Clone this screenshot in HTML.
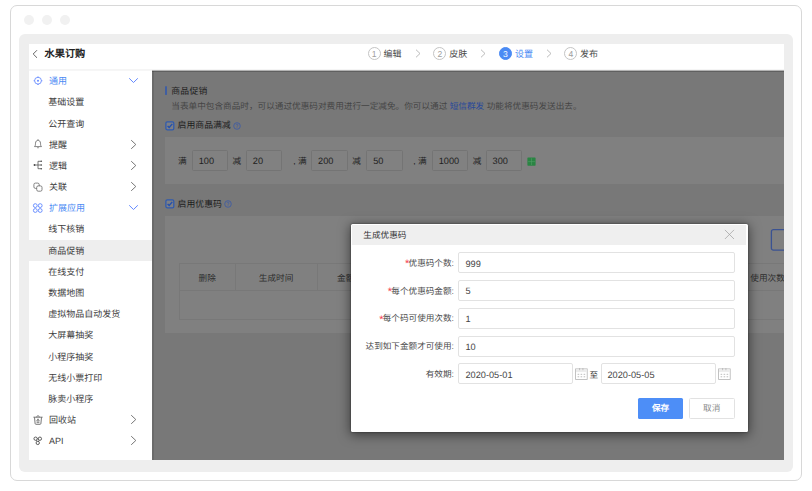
<!DOCTYPE html>
<html lang="zh-CN">
<head>
<meta charset="utf-8">
<title>生成优惠码</title>
<style>
*{box-sizing:border-box;margin:0;padding:0}
html,body{width:812px;height:491px;overflow:hidden;background:#fff}
body{position:relative;font-family:"Liberation Sans",sans-serif;color:#333;font-size:9px;line-height:1;text-rendering:geometricPrecision}
.abs,.abs>*{position:absolute}
div,span,svg,a{position:absolute;white-space:nowrap}
.it .t,.stept,#title,.mt,.lab,.fl{text-align-last:justify}
/* frames */
#outer{left:10px;top:5px;width:792px;height:476px;border:1px solid #d8d8d8;border-radius:7px;background:#fff}
.dot{width:10px;height:10px;border-radius:50%;background:#f1f1f1;top:14.7px}
#inner{left:19px;top:34px;width:774px;height:437.5px;background:#eeeeee;border-radius:6px}
#app{left:29px;top:44px;width:755px;height:416px;background:#fff;overflow:hidden}
/* header */
#hdr{left:0;top:0;width:755px;height:26px;background:#fff;border-bottom:1px solid #f5f5f5}
#hl1{left:0;top:26px;width:123px;height:1px;background:#f6f6f6;z-index:3}
#hl2{left:123px;top:26px;width:632px;height:1px;background:#b4b4b4;z-index:3}
#title{left:15.5px;top:4.6px;font-size:10.2px;font-weight:bold;color:#222;line-height:11px}
.stepc{width:13px;height:13px;border-radius:50%;border:1px solid #c4c4c4;top:3px;font-size:8.6px;line-height:12.2px;text-align:center;color:#a0a0a0}
.stepc.on{background:#4a8af4;border-color:#4a8af4;color:#fff}
.stept{top:4.9px;font-size:9px;line-height:10px;color:#484848}
.stept.on{color:#4a8af4}
/* sidebar */
#side{left:0;top:26px;width:123px;height:390px;background:#fff}
.it{left:0;width:123px;height:21.15px}
.it .t{left:20px;top:5.5px;font-size:9px;line-height:10px;color:#404040}
.it.b .t{color:#4a8af4}
.it.sel{background:#eeeeee}
.it .ic{left:2.7px;top:4.1px}
.it .cr{left:101.2px;top:4.6px}
.it .cd{left:99.3px;top:6.7px}
.it{height:21.19px}
.it.sel{margin-top:-0.3px;height:21px}
.it.sel .t{margin-top:0.3px}
/* main */
#main{left:123px;top:26px;width:632px;height:390px;background:#787878}
#me1{left:0;top:1px;width:632px;height:1px;background:rgba(0,0,0,.2)}
#me2{left:0;top:1px;width:2px;height:389px;background:rgba(0,0,0,.1)}
.pnl{background:#808080}
.mt{font-size:8.65px;line-height:10px;color:#1c1c1c}
.inp{width:36.5px;height:21px;border:1px solid #747474;border-radius:1.5px;background:#818181;top:13px}
.inp span{left:5.8px;top:5px;font-size:9.2px;line-height:10px;color:#1e1e1e}
.lab{top:18.9px;font-size:8.65px;line-height:10px;color:#222}
/* modal */
#modal{left:322px;top:180.3px;width:396.6px;height:208.1px;background:#fff;border-radius:1.5px;box-shadow:0 0 2px rgba(0,0,0,.55),0 2px 12px 1px rgba(0,0,0,.5)}
#mhead{left:1px;top:0.9px;width:394.2px;height:20px;background:#efefef}
#mi{left:0;top:0.7px;width:396px;height:207px}
.fi{left:106.5px;width:277px;height:21px;border:1px solid #e2e2e2;border-radius:2px;background:#fff}
.fi span,.di span{left:7px;top:5.2px;font-size:9.2px;line-height:10px;color:#444}
.fl{right:293.1px;font-size:8.6px;line-height:10px;color:#4a4a4a}
.fl i{color:#f5404f;font-style:normal;display:inline-block;width:3.5px;font-size:11px;line-height:0;vertical-align:-1.6px;margin-left:-0.3px}
.di{height:21px;border:1px solid #e2e2e2;border-radius:2px;background:#fff;top:138.5px}
</style>
</head>
<body>
<div id="outer"></div>
<div class="dot" style="left:24px"></div>
<div class="dot" style="left:42px"></div>
<div class="dot" style="left:60px"></div>
<div id="inner"></div>

<div id="app">
  <!-- header -->
  <div id="hdr">
    <svg style="left:3px;top:5.3px" width="6" height="10" viewBox="0 0 6 10"><path d="M5 1.2 L1.2 5 L5 8.8" fill="none" stroke="#555" stroke-width="0.9"/></svg>
    <div id="title" style="width:40.77px">水果订购</div>

    <div class="stepc" style="left:338.7px">1</div>
    <div class="stept" style="width:18.04px;left:354.5px">编辑</div>
    <svg style="left:385.5px;top:4.8px" width="6" height="9" viewBox="0 0 6 9"><path d="M1 0.7 L5 4.5 L1 8.3" fill="none" stroke="#aaa" stroke-width="0.8"/></svg>

    <div class="stepc" style="left:404.4px">2</div>
    <div class="stept" style="width:18.04px;left:420.2px">皮肤</div>
    <svg style="left:451px;top:4.8px" width="6" height="9" viewBox="0 0 6 9"><path d="M1 0.7 L5 4.5 L1 8.3" fill="none" stroke="#aaa" stroke-width="0.8"/></svg>

    <div class="stepc on" style="left:469.8px">3</div>
    <div class="stept on" style="width:18.04px;left:486px">设置</div>
    <svg style="left:516.7px;top:4.8px" width="6" height="9" viewBox="0 0 6 9"><path d="M1 0.7 L5 4.5 L1 8.3" fill="none" stroke="#aaa" stroke-width="0.8"/></svg>

    <div class="stepc" style="left:535.3px">4</div>
    <div class="stept" style="width:18.04px;left:551px">发布</div>
  </div>

  <div id="hl1"></div><div id="hl2"></div>
  <!-- sidebar -->
  <div id="side">
    <div class="it b" style="top:0.64px"><svg class="ic" width="12" height="12" viewBox="0 0 12 12"><g transform="translate(0,-0.3)"><circle cx="6" cy="6" r="3.4" fill="none" stroke="#5a82ff" stroke-width="0.8"/><circle cx="6" cy="6" r="0.95" fill="#5a82ff"/><path d="M6 1.7v0.9M6 9.4v0.9M1.7 6h0.9M9.4 6h0.9" stroke="#5a82ff" stroke-width="1.1"/></g></svg><span class="t" style="width:18.04px">通用</span><svg class="cd" width="11" height="7" viewBox="0 0 11 7"><path d="M1.2 1.3 L5.5 5.5 L9.8 1.3" fill="none" stroke="#5a82ff" stroke-width="0.95"/></svg></div>
    <div class="it" style="top:21.83px"><span class="t" style="width:36.04px;left:19.3px">基础设置</span></div>
    <div class="it" style="top:43.01px"><span class="t" style="width:36.04px;left:19.3px">公开查询</span></div>
    <div class="it" style="top:64.2px"><svg class="ic" width="12" height="12" viewBox="0 0 12 12"><path d="M2.5 8.6 C3.5 7.8 3.4 6.6 3.5 5.2 C3.6 3.3 4.7 2.3 6 2.3 C7.3 2.3 8.4 3.3 8.5 5.2 C8.6 6.6 8.5 7.8 9.5 8.6 Z" fill="none" stroke="#666" stroke-width="0.8" stroke-linejoin="round"/><path d="M5.2 9.5 Q6 10.7 6.8 9.5" fill="none" stroke="#666" stroke-width="0.8"/><path d="M6 1.3v0.8" stroke="#666" stroke-width="0.8"/></svg><span class="t" style="width:18.04px">提醒</span><svg class="cr" width="7" height="11" viewBox="0 0 7 11"><path d="M1.2 1.2 L5.8 5.5 L1.2 9.8" fill="none" stroke="#666" stroke-width="0.9"/></svg></div>
    <div class="it" style="top:85.39px"><svg class="ic" width="12" height="12" viewBox="0 0 12 12"><circle cx="2.5" cy="6" r="0.9" fill="#444"/><path d="M2.5 6H9.4M6 2.3V9.7M6 2.3H9.4M6 9.7H9.4" fill="none" stroke="#555" stroke-width="0.8"/><circle cx="9.3" cy="2.3" r="0.8" fill="#555"/><circle cx="9.3" cy="6" r="0.8" fill="#555"/><circle cx="9.3" cy="9.7" r="0.8" fill="#555"/></svg><span class="t" style="width:18.04px">逻辑</span><svg class="cr" width="7" height="11" viewBox="0 0 7 11"><path d="M1.2 1.2 L5.8 5.5 L1.2 9.8" fill="none" stroke="#666" stroke-width="0.9"/></svg></div>
    <div class="it" style="top:106.58px"><svg class="ic" width="12" height="12" viewBox="0 0 12 12"><rect x="1.9" y="2.1" width="5.3" height="5.3" rx="1.5" fill="none" stroke="#666" stroke-width="0.8"/><rect x="4.7" y="4.9" width="5.3" height="5.3" rx="1.5" fill="#fff" stroke="#666" stroke-width="0.8"/></svg><span class="t" style="width:18.04px">关联</span><svg class="cr" width="7" height="11" viewBox="0 0 7 11"><path d="M1.2 1.2 L5.8 5.5 L1.2 9.8" fill="none" stroke="#666" stroke-width="0.9"/></svg></div>
    <div class="it b" style="top:127.76px"><svg class="ic" width="12" height="12" viewBox="0 0 12 12"><g fill="none" stroke="#557fff" stroke-width="0.85"><circle cx="3.3" cy="3.6" r="1.9"/><circle cx="8.2" cy="3.6" r="1.9"/><circle cx="3.3" cy="8.5" r="1.9"/><circle cx="8.2" cy="8.5" r="1.9"/></g></svg><span class="t" style="width:36.04px">扩展应用</span><svg class="cd" width="11" height="7" viewBox="0 0 11 7"><path d="M1.2 1.3 L5.5 5.5 L9.8 1.3" fill="none" stroke="#5a82ff" stroke-width="0.95"/></svg></div>
    <div class="it" style="top:148.95px"><span class="t" style="width:36.04px;left:19.3px">线下核销</span></div>
    <div class="it sel" style="top:170.14px"><span class="t" style="width:35.4px;width:36.04px;left:19.3px">商品促销</span></div>
    <div class="it" style="top:191.32px"><span class="t" style="width:36.04px;left:19.3px">在线支付</span></div>
    <div class="it" style="top:212.51px"><span class="t" style="width:36.04px;left:19.3px">数据地图</span></div>
    <div class="it" style="top:233.7px"><span class="t" style="width:72.04px;left:19.3px">虚拟物品自动发货</span></div>
    <div class="it" style="top:254.88px"><span class="t" style="width:45.04px;left:19.3px">大屏幕抽奖</span></div>
    <div class="it" style="top:276.07px"><span class="t" style="width:45.04px;left:19.3px">小程序抽奖</span></div>
    <div class="it" style="top:297.26px"><span class="t" style="width:54.04px;left:19.3px">无线小票打印</span></div>
    <div class="it" style="top:318.44px"><span class="t" style="width:45.04px;left:19.3px">脉卖小程序</span></div>
    <div class="it" style="top:339.63px"><svg class="ic" width="12" height="12" viewBox="0 0 12 12"><g fill="none" stroke="#555" stroke-width="0.8" transform="translate(0,-0.5)"><path d="M1.4 3.7H10.6"/><path d="M4.3 3.5 Q6 0.6 7.7 3.5"/><path d="M2.5 3.9 L3.1 10 Q3.2 10.8 4 10.8 H8 Q8.8 10.8 8.9 10 L9.5 3.9"/><path d="M6 5.3 L4.7 7.6 H7.3 Z M4.6 9.1 H7.4" stroke-width="0.7"/></g></svg><span class="t" style="width:27.04px">回收站</span><svg class="cr" width="7" height="11" viewBox="0 0 7 11"><path d="M1.2 1.2 L5.8 5.5 L1.2 9.8" fill="none" stroke="#666" stroke-width="0.9"/></svg></div>
    <div class="it" style="top:360.82px"><svg class="ic" width="12" height="12" viewBox="0 0 12 12"><g fill="none" stroke="#4c4c4c" stroke-width="0.9"><circle cx="3.6" cy="3.7" r="1.65"/><circle cx="7.9" cy="3.7" r="1.65"/><circle cx="5.75" cy="7.9" r="1.65"/><path d="M4.3 5.2 L5.1 6.4 M7.2 5.2 L6.4 6.4 M5.2 3.7H6.3" stroke-width="0.8"/></g></svg><span class="t" style="width:14.54px">API</span><svg class="cr" width="7" height="11" viewBox="0 0 7 11"><path d="M1.2 1.2 L5.8 5.5 L1.2 9.8" fill="none" stroke="#666" stroke-width="0.9"/></svg></div>
  </div>

  <!-- main (dimmed by overlay) -->
  <div id="main">
    <div id="me1"></div><div id="me2"></div>
    <svg style="left:12px;top:16px" width="4" height="10" viewBox="0 0 4 10"><rect x="1.25" y="0.3" width="1.5" height="8.6" fill="#2d55b0"/></svg>
    <div class="mt" style="width:36.04px;left:19.3px;top:16.3px;color:#1e1e1e;font-size:8.85px">商品促销</div>
    <div class="mt" style="width:410.22px;left:19.3px;top:30.7px;color:#454545">当表单中包含商品时，可以通过优惠码对费用进行一定减免。你可以通过 <a style="position:static;color:#28489a">短信群发</a> 功能将优惠码发送出去。</div>

    <svg style="left:12.8px;top:50.7px" width="10" height="10" viewBox="0 0 10 10"><rect x="0.9" y="0.9" width="7.9" height="7.9" rx="1.4" fill="#7d7f85" stroke="#2f5aae" stroke-width="1.25"/><path d="M2.6 4.9 L4.2 6.5 L7.3 2.9" fill="none" stroke="#2450ad" stroke-width="1.45"/></svg>
    <div class="mt" style="width:53.08px;left:25.6px;top:50.4px;font-size:8.85px">启用商品满减</div>
    <svg style="left:81px;top:51.6px" width="8" height="8" viewBox="0 0 8 8"><circle cx="4" cy="4" r="3.3" fill="none" stroke="#3a5aa8" stroke-width="0.8"/><path d="M3 3.2 Q3 2.2 4 2.2 Q5 2.2 5 3.1 Q5 3.8 4 4.2 V4.8 M4 5.4V6" fill="none" stroke="#3a5aa8" stroke-width="0.65"/></svg>

    <div class="pnl" style="left:13.3px;top:67.3px;width:619px;height:47px">
      <span class="lab" style="width:8.66px;left:12.7px">满</span>
      <div class="inp" style="left:26.6px"><span>100</span></div>
      <span class="lab" style="width:8.66px;left:67.3px">减</span>
      <div class="inp" style="left:80.7px"><span>20</span></div>
      <span class="lab" style="width:13.44px;left:128px">, 满</span>
      <div class="inp" style="left:146px"><span>200</span></div>
      <span class="lab" style="width:8.66px;left:187px">减</span>
      <div class="inp" style="left:201.1px"><span>50</span></div>
      <span class="lab" style="width:13.44px;left:248px">, 满</span>
      <div class="inp" style="left:266.6px"><span>1000</span></div>
      <span class="lab" style="width:8.66px;left:307.5px">减</span>
      <div class="inp" style="left:320.5px"><span>300</span></div>
      <svg style="left:362px;top:19.4px" width="9" height="9" viewBox="0 0 9 9"><rect x="0.4" y="0.5" width="8.2" height="8.2" rx="0.6" fill="#2a8443"/><path d="M4.5 1.2V8M1.1 4.6H7.9" stroke="#4f9d64" stroke-width="0.6"/></svg>
    </div>

    <svg style="left:12.8px;top:129.3px" width="10" height="10" viewBox="0 0 10 10"><rect x="0.9" y="0.9" width="7.9" height="7.9" rx="1.4" fill="#7d7f85" stroke="#2f5aae" stroke-width="1.25"/><path d="M2.6 4.9 L4.2 6.5 L7.3 2.9" fill="none" stroke="#2450ad" stroke-width="1.45"/></svg>
    <div class="mt" style="width:44.24px;left:25.6px;top:129.1px;font-size:8.85px">启用优惠码</div>
    <svg style="left:72.3px;top:130.1px" width="8" height="8" viewBox="0 0 8 8"><circle cx="4" cy="4" r="3.3" fill="none" stroke="#3a5aa8" stroke-width="0.8"/><path d="M3 3.2 Q3 2.2 4 2.2 Q5 2.2 5 3.1 Q5 3.8 4 4.2 V4.8 M4 5.4V6" fill="none" stroke="#3a5aa8" stroke-width="0.65"/></svg>

    <div class="pnl" style="left:13.3px;top:146.2px;width:619px;height:117px">
      <div style="left:13.5px;top:46.9px;width:606px;height:57px;border:1px solid #787878;border-right:0"></div>
      <div style="left:13.5px;top:74.3px;width:606px;height:1px;background:#787878"></div>
      <div style="left:69.7px;top:46.9px;width:1px;height:28px;background:#787878"></div>
      <div style="left:151.7px;top:46.9px;width:1px;height:28px;background:#787878"></div>
      <span class="mt" style="width:17.29px;left:33.2px;top:57.3px;color:#2e2e2e">删除</span>
      <span class="mt" style="width:34.54px;left:93.5px;top:57.3px;color:#2e2e2e">生成时间</span>
      <span class="mt" style="width:17.29px;left:171.7px;top:57.3px;color:#2e2e2e">金额</span>
      <span class="mt" style="width:34.54px;left:585px;top:57.3px;color:#2e2e2e">使用次数</span>
      <svg style="left:604px;top:11px" width="16" height="26" viewBox="0 0 16 26"><rect x="2.4" y="2.7" width="20" height="20.5" rx="2" fill="none" stroke="#3a5292" stroke-width="1.3"/></svg>
    </div>
  </div>

  <!-- modal -->
  <div id="modal">
    <div id="mhead">
      <span class="mt" style="width:43.16px;left:11.3px;top:4.6px;color:#333">生成优惠码</span>
      <svg style="left:372.2px;top:4.2px" width="11" height="11" viewBox="0 0 11 11"><path d="M0.9 0.9 L10 10 M10 0.9 L0.9 10" stroke="#a2a2a2" stroke-width="0.75" fill="none"/></svg>
    </div>
    <div id="mi">
    <span class="fl" style="width:48.58px;top:32.9px"><i>*</i>优惠码个数:</span>
    <span class="fl" style="width:65.77px;top:60.7px"><i>*</i>每个优惠码金额:</span>
    <span class="fl" style="width:74.36px;top:88.5px"><i>*</i>每个码可使用次数:</span>
    <span class="fl" style="width:88.35px;top:116.3px">达到如下金额才可使用:</span>
    <span class="fl" style="width:28.19px;top:144px">有效期:</span>
    <div class="fi" style="top:27.4px"><span>999</span></div>
    <div class="fi" style="top:55.2px"><span>5</span></div>
    <div class="fi" style="top:83px"><span>1</span></div>
    <div class="fi" style="top:110.8px"><span>10</span></div>

    <div class="di" style="left:106.5px;width:115.3px"><span>2020-05-01</span></div>
    <svg style="left:224.2px;top:143.3px" width="13" height="12" viewBox="0 0 13 12"><rect x="0.6" y="0.9" width="11.6" height="10.6" fill="#fff" stroke="#b4b4b4" stroke-width="0.8"/><rect x="1" y="1.3" width="10.8" height="2.8" fill="#ececec"/><path d="M4.6 0v2.2M7.9 0v2.2" stroke="#b4b4b4" stroke-width="0.8"/><g fill="#c4c4c4"><rect x="2.6" y="5.8" width="1.6" height="1.1"/><rect x="5.6" y="5.8" width="1.6" height="1.1"/><rect x="8.6" y="5.8" width="1.6" height="1.1"/><rect x="2.6" y="8.2" width="1.6" height="1.1"/><rect x="5.6" y="8.2" width="1.6" height="1.1"/><rect x="8.6" y="8.2" width="1.6" height="1.1"/></g></svg>
    <span class="mt" style="width:8.66px;left:238.6px;top:145.1px;color:#333">至</span>
    <svg style="left:367.3px;top:143.3px" width="13" height="12" viewBox="0 0 13 12"><rect x="0.6" y="0.9" width="11.6" height="10.6" fill="#fff" stroke="#b4b4b4" stroke-width="0.8"/><rect x="1" y="1.3" width="10.8" height="2.8" fill="#ececec"/><path d="M4.6 0v2.2M7.9 0v2.2" stroke="#b4b4b4" stroke-width="0.8"/><g fill="#c4c4c4"><rect x="2.6" y="5.8" width="1.6" height="1.1"/><rect x="5.6" y="5.8" width="1.6" height="1.1"/><rect x="8.6" y="5.8" width="1.6" height="1.1"/><rect x="2.6" y="8.2" width="1.6" height="1.1"/><rect x="5.6" y="8.2" width="1.6" height="1.1"/><rect x="8.6" y="8.2" width="1.6" height="1.1"/></g></svg>
    <div class="di" style="left:250px;width:114.5px"><span style="left:5.5px">2020-05-05</span></div>

    <div style="left:287px;top:173px;width:45px;height:21px;background:#4d8ef7;border-radius:1.5px;color:#fff;font-weight:600;font-size:8.6px;line-height:21px;text-align:center">保存</div>
    <div style="left:337.8px;top:173px;width:45.8px;height:21px;background:#fff;border:1px solid #e2e2e2;border-radius:1.5px;color:#888;font-size:8.6px;line-height:19px;text-align:center">取消</div>
    </div>
  </div>
</div>
</body>
</html>
